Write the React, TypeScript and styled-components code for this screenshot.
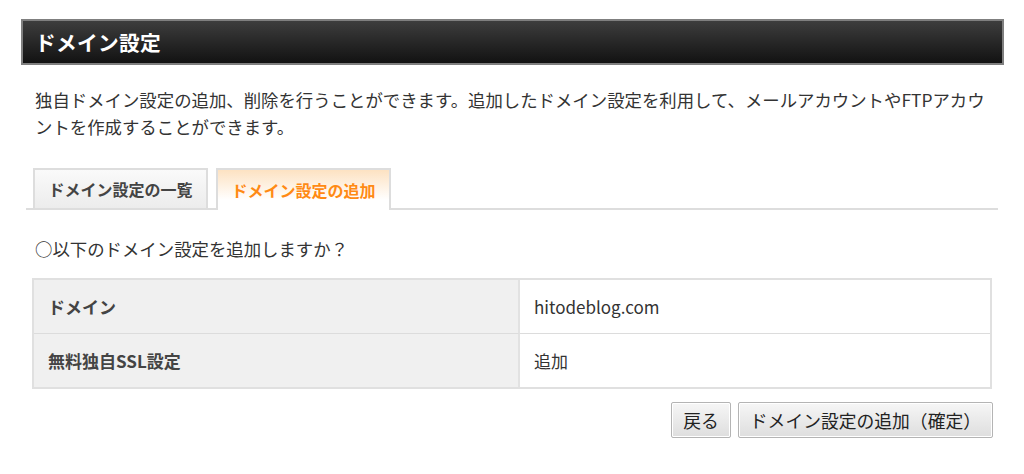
import React from 'react';
import styled, { createGlobalStyle } from 'styled-components';

const GlobalStyle = createGlobalStyle`
  body {
    margin: 0;
    background: #fff;
    font-family: "Noto Sans CJK JP", "Noto Sans", sans-serif;
    color: #333;
  }
`;

const Page = styled.div`
  width: 983px;
  padding: 19px 20px 30px 21px;
`;

const Header = styled.h1`
  margin: 0;
  height: 42px;
  display: flex;
  align-items: center;
  padding-left: 12px;
  border: 2px solid #7f7f7f;
  background: linear-gradient(#3d3d3d, #121212);
  color: #fff;
  font-size: 20.7px;
  font-weight: bold;
  letter-spacing: 0.3px;
`;

const Lead = styled.p`
  margin: 21px 0 0;
  padding: 0 14px;
  font-size: 17.4px;
  line-height: 27px;
  color: #333;
`;

const TabBar = styled.div`
  display: flex;
  gap: 8px;
  margin: 28px 6px 0 5px;
  padding-left: 7px;
  border-bottom: 2px solid #ddd;
`;

const Tab = styled.div<{ active?: boolean }>`
  width: 171px;
  display: flex;
  align-items: center;
  justify-content: center;
  border: 2px solid #ddd;
  border-bottom: none;
  font-size: 16px;
  font-weight: bold;
  color: ${p => (p.active ? '#ff8a14' : '#444')};
  background: ${p => (p.active ? 'linear-gradient(#fde2c2, #fff 75%)' : 'linear-gradient(#fafafa, #ececec)')};
  margin-bottom: ${p => (p.active ? '-2px' : '0')};
  height: ${p => (p.active ? '40px' : '38px')};
`;

const Question = styled.p`
  margin: 25px 0 0;
  padding-left: 14px;
  font-size: 17.4px;
  line-height: 27px;
`;

const Table = styled.div`
  margin: 16px 0 0 11px;
  width: 956px;
  display: grid;
  grid-template-columns: 486px 1fr;
  border: 2px solid #e0e0e0;
`;

const Th = styled.div<{ last?: boolean }>`
  height: 53px;
  display: flex;
  align-items: center;
  padding-left: 14px;
  background: #f0f0f0;
  border-right: 2px solid #e2e2e2;
  border-bottom: ${p => (p.last ? 'none' : '1px solid #dcdcdc')};
  font-size: 17px;
  font-weight: bold;
  color: #444;
`;

const Td = styled.div<{ last?: boolean }>`
  height: 53px;
  display: flex;
  align-items: center;
  padding-left: 14px;
  border-bottom: ${p => (p.last ? 'none' : '1px solid #dcdcdc')};
  font-size: 17px;
  color: #333;
`;

const Actions = styled.div`
  display: flex;
  justify-content: flex-end;
  gap: 7px;
  margin: 13px 11px 0 0;
`;

const Button = styled.button`
  height: 36px;
  padding: 0 11px;
  border: 1px solid #b4b4b4;
  border-radius: 2px;
  background: linear-gradient(#f6f6f6, #dedede);
  font-family: "Noto Sans CJK JP", sans-serif;
  font-size: 17.8px;
  color: #222;
  box-shadow: inset 0 0 0 1px #fff;
`;

export default function App() {
  return (
    <Page>
      <GlobalStyle />
      <Header>ドメイン設定</Header>
      <Lead>
        独自ドメイン設定の追加、削除を行うことができます。追加したドメイン設定を利用して、メールアカウントやFTPアカウントを作成することができます。
      </Lead>
      <TabBar>
        <Tab>ドメイン設定の一覧</Tab>
        <Tab active>ドメイン設定の追加</Tab>
      </TabBar>
      <Question>○以下のドメイン設定を追加しますか？</Question>
      <Table>
        <Th>ドメイン</Th>
        <Td>hitodeblog.com</Td>
        <Th last>無料独自SSL設定</Th>
        <Td last>追加</Td>
      </Table>
      <Actions>
        <Button>戻る</Button>
        <Button>ドメイン設定の追加（確定）</Button>
      </Actions>
    </Page>
  );
}
